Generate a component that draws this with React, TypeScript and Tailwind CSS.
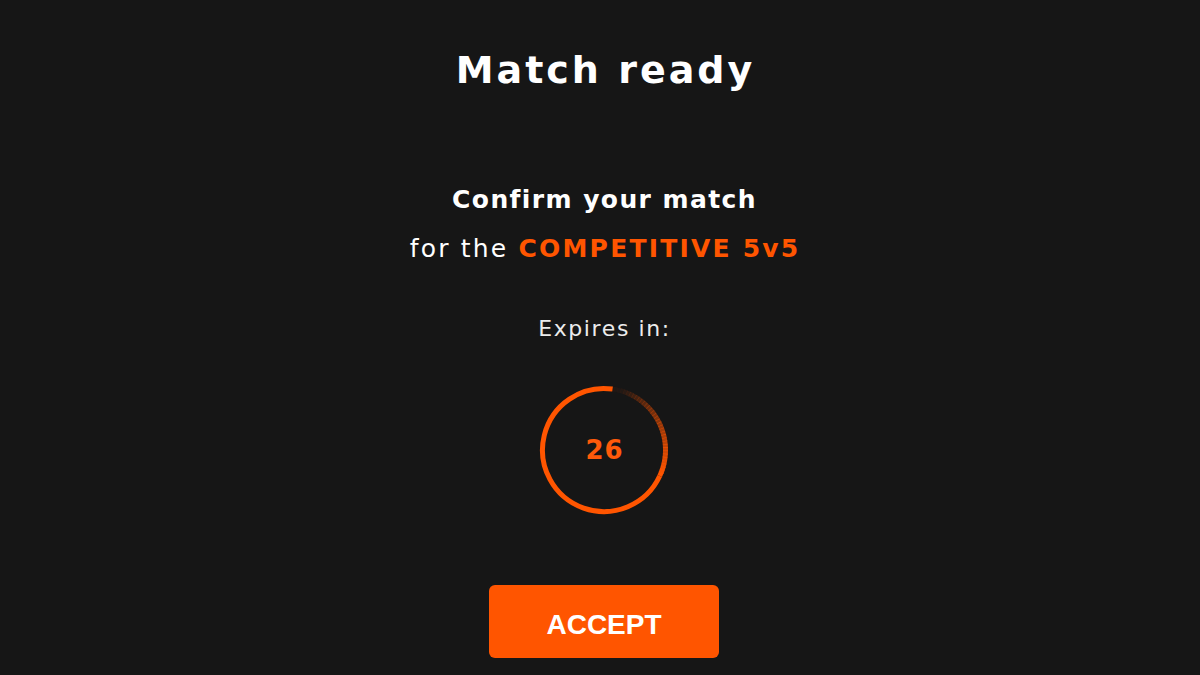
import React from "react";

function polar(cx: number, cy: number, r: number, deg: number) {
  const a = (deg * Math.PI) / 180;
  return [cx + r * Math.cos(a), cy + r * Math.sin(a)];
}

function Timer() {
  const cx = 65;
  const cy = 65;
  const r = 61.5;
  const start = 25;
  const end = 278;
  const [sx, sy] = polar(cx, cy, r, start);
  const [ex, ey] = polar(cx, cy, r, end);
  const solid = `M ${sx} ${sy} A ${r} ${r} 0 1 1 ${ex} ${ey}`;
  const segs: { d: string; o: number }[] = [];
  const step = 3;
  const fadeFrom = 25;
  const fadeTo = -82;
  for (let a = fadeFrom; a > fadeTo; a -= step) {
    const b = Math.max(a - step - 0.6, fadeTo);
    const [x1, y1] = polar(cx, cy, r, a);
    const [x2, y2] = polar(cx, cy, r, b);
    const t = (fadeFrom - a) / (fadeFrom - fadeTo);
    segs.push({ d: `M ${x1} ${y1} A ${r} ${r} 0 0 0 ${x2} ${y2}`, o: Math.max(1 - t * 1.05, 0.04) });
  }
  return (
    <div className="relative w-[130px] h-[130px] flex items-center justify-center">
      <svg className="absolute inset-0" width="130" height="130" viewBox="0 0 130 130">
        {segs.map((s, i) => (
          <path key={i} d={s.d} fill="none" stroke="#ff5500" strokeOpacity={s.o} strokeWidth="5" />
        ))}
        <path d={solid} fill="none" stroke="#ff5500" strokeWidth="5" />
      </svg>
      <span className="relative text-[26px] leading-none font-bold text-[#ff5a0a] font-['DejaVu_Sans',sans-serif] tracking-[1px] pl-[1px]">
        26
      </span>
    </div>
  );
}

export default function App() {
  return (
    <div className="w-[1200px] h-[675px] bg-[#161616] flex flex-col items-center overflow-hidden pl-[8px] font-['DejaVu_Sans',sans-serif] text-white">
      <h1 className="mt-[51px] text-[38px] leading-[38px] font-bold tracking-[3px] pl-[3px]">Match ready</h1>
      <div className="mt-[98px] flex flex-col items-center">
        <p className="text-[25px] leading-[25px] font-bold tracking-[1.4px] pl-[1px]">Confirm your match</p>
        <p className="mt-[24px] text-[25px] leading-[25px] tracking-[2.2px] pl-[2px]">
          for the <span className="font-bold text-[#ff5500]">COMPETITIVE 5v5</span>
        </p>
      </div>
      <p className="mt-[57px] text-[22px] leading-[22px] tracking-[1.6px] pl-[1px] text-[#ececec]">Expires in:</p>
      <div className="mt-[45px]">
        <Timer />
      </div>
      <button className="mt-[70px] w-[230px] h-[73px] rounded-[6px] bg-[#ff5500] flex items-center justify-center pt-[7px] text-white text-[28px] font-bold font-['Liberation_Sans',Arial,sans-serif]">
        ACCEPT
      </button>
    </div>
  );
}
